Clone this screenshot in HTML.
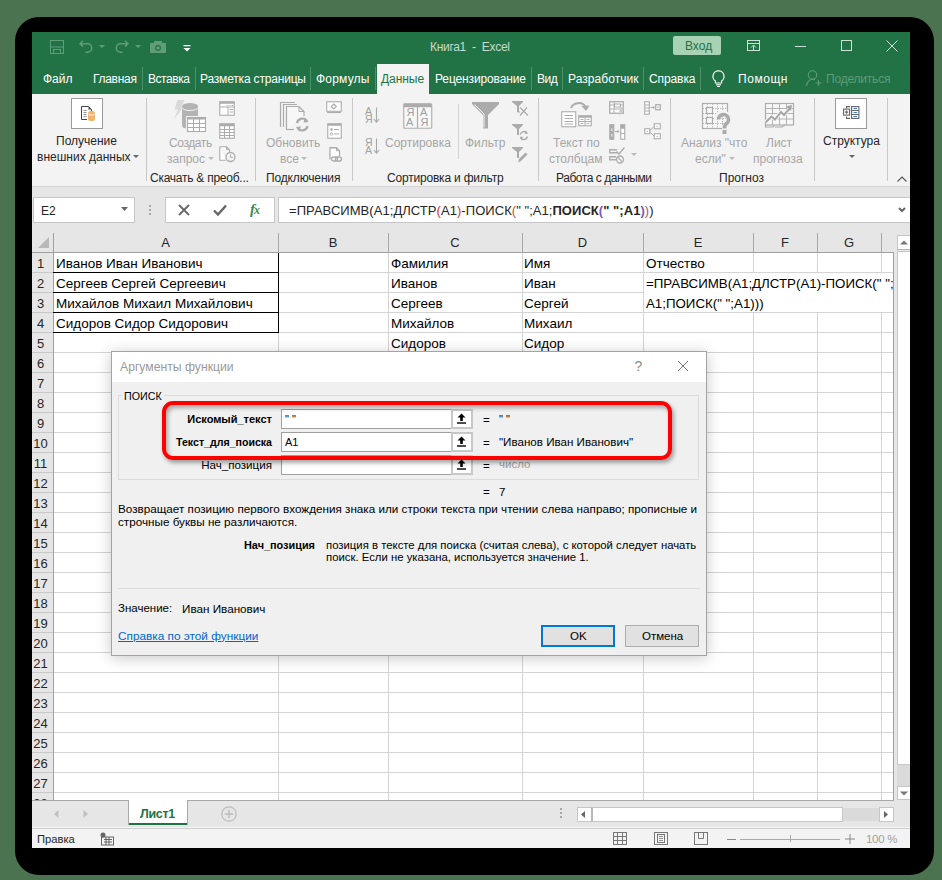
<!DOCTYPE html>
<html><head><meta charset="utf-8"><style>
*{margin:0;padding:0;box-sizing:border-box}
html,body{width:942px;height:880px;overflow:hidden;background:#4c7350;font-family:"Liberation Sans",sans-serif;position:relative}
.a{position:absolute}
.t{position:absolute;line-height:1;white-space:nowrap}
svg{overflow:visible}
</style></head><body>
<div class="a" style="left:15px;top:17px;width:919px;height:858px;background:#000;border-radius:24px"></div>
<div class="a" style="left:32px;top:32px;width:878px;height:816px;background:#f3f3f3"></div>
<div class="a" style="left:32px;top:32px;width:878px;height:62px;background:#217346"></div>
<svg class="a" style="left:50px;top:40px;" width="15" height="14" viewBox="0 0 15 14"><rect x="0.5" y="0.5" width="13" height="13" fill="none" stroke="#5f9d78"/><path d="M0.5 7 H13.5" stroke="#5f9d78"/><rect x="3.5" y="9.5" width="7" height="4" fill="none" stroke="#5f9d78"/></svg>
<svg class="a" style="left:79px;top:40px;" width="14" height="13" viewBox="0 0 14 13"><path d="M4 0.8 L1 3.8 L4 6.8 M1 3.8 H8.5 A4.2 4.2 0 0 1 8.5 12.2 H6.5" fill="none" stroke="#5f9d78" stroke-width="1.5"/></svg>
<svg class="a" style="left:99px;top:45px;" width="6" height="4" viewBox="0 0 6 4"><path d="M0 0 H6 L3 3 Z" fill="#5f9d78"/></svg>
<svg class="a" style="left:115px;top:40px;" width="14" height="13" viewBox="0 0 14 13"><path d="M10 0.8 L13 3.8 L10 6.8 M13 3.8 H5.5 A4.2 4.2 0 0 0 5.5 12.2 H7.5" fill="none" stroke="#5f9d78" stroke-width="1.5"/></svg>
<svg class="a" style="left:135px;top:45px;" width="6" height="4" viewBox="0 0 6 4"><path d="M0 0 H6 L3 3 Z" fill="#5f9d78"/></svg>
<svg class="a" style="left:150px;top:41px;" width="16" height="12" viewBox="0 0 16 12"><rect x="0" y="2" width="16" height="10" fill="#5f9d78"/><rect x="4" y="0" width="8" height="3" fill="#5f9d78"/><circle cx="8" cy="7" r="3" fill="#217346"/><circle cx="8" cy="7" r="1.8" fill="#5f9d78"/></svg>
<svg class="a" style="left:183px;top:45px;" width="8" height="7" viewBox="0 0 8 7"><rect x="0.5" y="0" width="7" height="1.3" fill="#fff"/><path d="M0.5 3 H7.5 L4 6.5 Z" fill="#fff"/></svg>
<div class="t " style="left:430px;top:40.84px;font-size:12px;color:#c6dccf;font-weight:normal;white-space:pre;letter-spacing:-0.3px">Книга1  -  Excel</div>
<div class="a" style="left:673px;top:36px;width:48px;height:19px;background:#a7d2b4;border-radius:2px"></div>
<div class="t " style="left:685px;top:39.84px;font-size:12px;color:#217346;font-weight:normal;">Вход</div>
<svg class="a" style="left:747px;top:40px;" width="13" height="11" viewBox="0 0 13 11"><rect x="0.5" y="0.5" width="12" height="10" fill="none" stroke="#cfe1d6" stroke-width="1"/><line x1="0.5" y1="3.5" x2="12.5" y2="3.5" stroke="#cfe1d6"/><path d="M4 7.5 L6.5 5 L9 7.5 M6.5 5.5 V10.5" stroke="#cfe1d6" fill="none" stroke-width="1"/></svg>
<div class="a" style="left:795px;top:46px;width:11px;height:1px;background:#cfe1d6"></div>
<div class="a" style="left:841px;top:40px;width:11px;height:11px;border:1px solid #cfe1d6"></div>
<svg class="a" style="left:886px;top:40px;" width="12" height="12" viewBox="0 0 12 12"><path d="M0.5 0.5 L11.5 11.5 M11.5 0.5 L0.5 11.5" stroke="#cfe1d6" stroke-width="1"/></svg>
<div class="a" style="left:142px;top:67px;width:1px;height:23px;background:#4e9068"></div>
<div class="a" style="left:195px;top:67px;width:1px;height:23px;background:#4e9068"></div>
<div class="a" style="left:310px;top:67px;width:1px;height:23px;background:#4e9068"></div>
<div class="a" style="left:375px;top:67px;width:1px;height:23px;background:#4e9068"></div>
<div class="a" style="left:531px;top:67px;width:1px;height:23px;background:#4e9068"></div>
<div class="a" style="left:562px;top:67px;width:1px;height:23px;background:#4e9068"></div>
<div class="a" style="left:643px;top:67px;width:1px;height:23px;background:#4e9068"></div>
<div class="a" style="left:700px;top:67px;width:1px;height:23px;background:#4e9068"></div>
<div class="a" style="left:377px;top:64px;width:52px;height:30px;background:#f3f3f3"></div>
<div class="t " style="left:43px;top:73.34px;font-size:12px;color:#ffffff;font-weight:normal;letter-spacing:-0.0px">Файл</div>
<div class="t " style="left:93px;top:73.34px;font-size:12px;color:#ffffff;font-weight:normal;letter-spacing:-0.3px">Главная</div>
<div class="t " style="left:148px;top:73.34px;font-size:12px;color:#ffffff;font-weight:normal;letter-spacing:-0.45px">Вставка</div>
<div class="t " style="left:200px;top:73.34px;font-size:12px;color:#ffffff;font-weight:normal;letter-spacing:-0.18px">Разметка страницы</div>
<div class="t " style="left:316px;top:73.34px;font-size:12px;color:#ffffff;font-weight:normal;letter-spacing:0.2px">Формулы</div>
<div class="t " style="left:435px;top:73.34px;font-size:12px;color:#ffffff;font-weight:normal;letter-spacing:-0.13px">Рецензирование</div>
<div class="t " style="left:537px;top:73.34px;font-size:12px;color:#ffffff;font-weight:normal;letter-spacing:-0.45px">Вид</div>
<div class="t " style="left:568px;top:73.34px;font-size:12px;color:#ffffff;font-weight:normal;letter-spacing:0.05px">Разработчик</div>
<div class="t " style="left:649px;top:73.34px;font-size:12px;color:#ffffff;font-weight:normal;letter-spacing:-0.1px">Справка</div>
<div class="t " style="left:738px;top:73.34px;font-size:12px;color:#ffffff;font-weight:normal;letter-spacing:0.55px">Помощн</div>
<div class="t " style="left:381px;top:73.34px;font-size:12px;color:#217346;font-weight:normal;letter-spacing:-0.05px">Данные</div>
<svg class="a" style="left:712px;top:70px;" width="13" height="17" viewBox="0 0 13 17"><path d="M6.5 0.8 A5.6 5.6 0 0 1 9.6 11 V13 H3.4 V11 A5.6 5.6 0 0 1 6.5 0.8 Z" fill="none" stroke="#fff" stroke-width="1.1"/><line x1="4" y1="14.8" x2="9" y2="14.8" stroke="#fff" stroke-width="1.1"/><line x1="5" y1="16.5" x2="8" y2="16.5" stroke="#fff" stroke-width="1"/></svg>
<svg class="a" style="left:806px;top:70px;" width="17" height="17" viewBox="0 0 17 17"><circle cx="6.5" cy="5" r="4.2" fill="none" stroke="#5f9c78" stroke-width="1.1"/><path d="M0.6 16 A6.5 6.5 0 0 1 9 9.6" fill="none" stroke="#5f9c78" stroke-width="1.1"/><path d="M12.5 10 V16 M9.5 13 H15.5" stroke="#5f9c78" stroke-width="1.1"/></svg>
<div class="t " style="left:826px;top:73.34px;font-size:12px;color:#5f9c78;font-weight:normal;letter-spacing:-0.2px">Поделиться</div>
<div class="a" style="left:32px;top:94px;width:878px;height:92px;background:#f3f3f3"></div>
<div class="a" style="left:32px;top:186px;width:878px;height:1px;background:#d6d6d6"></div>
<div class="a" style="left:32px;top:187px;width:878px;height:46px;background:#e6e6e6"></div>
<div class="a" style="left:146px;top:98px;width:1px;height:83px;background:#c8c8c8"></div>
<div class="a" style="left:255px;top:98px;width:1px;height:83px;background:#c8c8c8"></div>
<div class="a" style="left:352px;top:98px;width:1px;height:83px;background:#c8c8c8"></div>
<div class="a" style="left:538px;top:98px;width:1px;height:83px;background:#c8c8c8"></div>
<div class="a" style="left:670px;top:98px;width:1px;height:83px;background:#c8c8c8"></div>
<div class="a" style="left:814px;top:98px;width:1px;height:83px;background:#c8c8c8"></div>
<div class="a" style="left:887px;top:98px;width:1px;height:83px;background:#c8c8c8"></div>
<div class="a" style="left:458px;top:104px;width:1px;height:55px;background:#d4d4d4"></div>
<div class="a" style="left:71px;top:98px;width:32px;height:31px;background:#fff;border:1px solid #999"></div>
<svg class="a" style="left:81px;top:106px;" width="15" height="16" viewBox="0 0 15 16"><path d="M0.5 13.5 V0.5 H7.5 L10.5 3.5 V5" fill="#fff" stroke="#444" stroke-width="1"/><path d="M7.5 0.5 V3.5 H10.5 Z" fill="#444"/><path d="M2.5 4.5 H5.5 M2.5 6.5 H5.5 M2.5 8.5 H5.5 M2.5 10.5 H5.5" stroke="#777" stroke-width="0.8"/><path d="M0.5 13.5 H6" stroke="#444"/><rect x="7" y="5" width="7" height="10" rx="2.5" fill="#f2b36a"/><path d="M7.5 8.5 Q10.5 10 13.5 8.5" stroke="#fff" stroke-width="0.9" fill="none"/></svg>
<div class="t " style="left:56px;top:135.34px;font-size:12px;color:#262626;font-weight:normal;">Получение</div>
<div class="t " style="left:37px;top:150.64px;font-size:12px;color:#262626;font-weight:normal;">внешних данных</div>
<svg class="a" style="left:133px;top:155px;" width="6" height="4" viewBox="0 0 6 4"><path d="M0 0 H6 L3 3 Z" fill="#666"/></svg>
<div class="t " style="left:169px;top:136.64px;font-size:12px;color:#a6a6a6;font-weight:normal;letter-spacing:-0.4px">Создать</div>
<div class="t " style="left:167px;top:152.84px;font-size:12px;color:#a6a6a6;font-weight:normal;">запрос</div>
<svg class="a" style="left:208px;top:157px;" width="6" height="4" viewBox="0 0 6 4"><path d="M0 0 H6 L3 3 Z" fill="#bbb"/></svg>
<div class="t " style="left:150px;top:172.34px;font-size:12px;color:#262626;font-weight:normal;letter-spacing:-0.25px">Скачать &amp; преоб...</div>
<div class="t " style="left:266px;top:136.64px;font-size:12px;color:#a6a6a6;font-weight:normal;">Обновить</div>
<div class="t " style="left:280px;top:152.84px;font-size:12px;color:#a6a6a6;font-weight:normal;">все</div>
<svg class="a" style="left:301px;top:157px;" width="6" height="4" viewBox="0 0 6 4"><path d="M0 0 H6 L3 3 Z" fill="#bbb"/></svg>
<div class="t " style="left:266px;top:172.34px;font-size:12px;color:#262626;font-weight:normal;letter-spacing:-0.15px">Подключения</div>
<div class="t " style="left:385px;top:137.34px;font-size:12px;color:#a6a6a6;font-weight:normal;">Сортировка</div>
<div class="t " style="left:465px;top:137.34px;font-size:12px;color:#a6a6a6;font-weight:normal;">Фильтр</div>
<div class="t " style="left:387px;top:172.34px;font-size:12px;color:#262626;font-weight:normal;letter-spacing:-0.2px">Сортировка и фильтр</div>
<div class="t " style="left:553px;top:137.34px;font-size:12px;color:#a6a6a6;font-weight:normal;">Текст по</div>
<div class="t " style="left:549px;top:153.14px;font-size:12px;color:#a6a6a6;font-weight:normal;">столбцам</div>
<svg class="a" style="left:631px;top:153px;" width="6" height="4" viewBox="0 0 6 4"><path d="M0 0 H6 L3 3 Z" fill="#bbb"/></svg>
<div class="t " style="left:556px;top:172.34px;font-size:12px;color:#262626;font-weight:normal;letter-spacing:-0.45px">Работа с данными</div>
<div class="t " style="left:681px;top:137.34px;font-size:12px;color:#a6a6a6;font-weight:normal;">Анализ &quot;что</div>
<div class="t " style="left:695px;top:153.14px;font-size:12px;color:#a6a6a6;font-weight:normal;">если&quot;</div>
<svg class="a" style="left:729px;top:157px;" width="6" height="4" viewBox="0 0 6 4"><path d="M0 0 H6 L3 3 Z" fill="#bbb"/></svg>
<div class="t " style="left:766px;top:137.34px;font-size:12px;color:#a6a6a6;font-weight:normal;">Лист</div>
<div class="t " style="left:753px;top:153.14px;font-size:12px;color:#a6a6a6;font-weight:normal;">прогноза</div>
<div class="t " style="left:719px;top:172.34px;font-size:12px;color:#262626;font-weight:normal;">Прогноз</div>
<div class="a" style="left:835px;top:98px;width:32px;height:31px;background:#fff;border:1px solid #999"></div>
<div class="t " style="left:823px;top:134.84px;font-size:12px;color:#262626;font-weight:normal;">Структура</div>
<svg class="a" style="left:849px;top:155px;" width="6" height="4" viewBox="0 0 6 4"><path d="M0 0 H6 L3 3 Z" fill="#666"/></svg>
<svg class="a" style="left:897px;top:176px;" width="10" height="6" viewBox="0 0 10 6"><path d="M0.5 5.5 L5 1 L9.5 5.5" fill="none" stroke="#555" stroke-width="1.1"/></svg>
<svg class="a" style="left:170px;top:96px;" width="40" height="40" viewBox="0 0 40 40">
<path d="M7.5 4 L14.7 4 L11 11 L13.5 11 L4 23 L8 13.5 L4.5 13.5 Z" fill="#d9d9d9"/>
<path d="M12 10 V30 A8 3 0 0 0 28 30 V10 Z" fill="#b3b3b3"/>
<ellipse cx="20" cy="10" rx="8" ry="3" fill="#b3b3b3"/>
<path d="M12 11.5 A8 3 0 0 0 28 11.5" fill="none" stroke="#f3f3f3" stroke-width="1"/>
<rect x="16" y="20" width="21" height="16" fill="#f3f3f3"/>
<rect x="17.5" y="21.5" width="18" height="14" fill="#fff" stroke="#acacac" stroke-width="1.1"/>
<rect x="17.5" y="21.5" width="18" height="2" fill="#acacac"/>
<path d="M23.5 23 V35 M29.5 23 V35 M17.5 27.5 H35.5 M17.5 31.5 H35.5" stroke="#acacac" stroke-width="1"/>
</svg>
<svg class="a" style="left:219px;top:101px;" width="16" height="15" viewBox="0 0 16 15">
<rect x="0.75" y="0.75" width="14.5" height="13.5" fill="#fff" stroke="#acacac" stroke-width="1.1"/>
<rect x="0.75" y="0.75" width="14.5" height="2" fill="#acacac"/>
<path d="M0.75 6 H15.25 M9 6 V14" stroke="#acacac" stroke-width="1"/>
<path d="M7.5 4.5 h1 M9.5 4.5 h1 M11.5 4.5 h1 M13 4.5 h1 M10.5 8.5 H14 M10.5 11 H14" stroke="#acacac" stroke-width="1"/>
</svg>
<svg class="a" style="left:219px;top:123px;" width="16" height="16" viewBox="0 0 16 16">
<rect x="0.75" y="0.75" width="14.5" height="14.5" fill="#fff" stroke="#acacac" stroke-width="1.1"/>
<rect x="0.75" y="0.75" width="14.5" height="2.5" fill="#acacac"/>
<path d="M5.5 3 V15 M10.5 3 V15 M0.75 6.5 H15.25 M0.75 9.5 H15.25 M0.75 12.5 H15.25" stroke="#acacac" stroke-width="1"/>
</svg>
<svg class="a" style="left:219px;top:146px;" width="17" height="16" viewBox="0 0 17 16">
<path d="M0.75 0.75 H7.5 L10.5 3.75 V7 M7 14.25 H0.75 V0.75" fill="#fff" stroke="#acacac" stroke-width="1.1"/>
<path d="M7.5 0.75 V3.75 H10.5" fill="none" stroke="#acacac" stroke-width="1"/>
<circle cx="11.5" cy="11" r="4.5" fill="#f3f3f3" stroke="#acacac" stroke-width="1.3"/>
<path d="M11.5 8.5 V11.3 H14" fill="none" stroke="#acacac" stroke-width="1"/>
</svg>
<svg class="a" style="left:275px;top:96px;" width="40" height="40" viewBox="0 0 40 40">
<path d="M5.5 31 V6.5 H20" fill="none" stroke="#acacac" stroke-width="1.2"/>
<path d="M8.5 31 V8.5 H22" fill="none" stroke="#acacac" stroke-width="1.2"/>
<path d="M11.5 33.5 V10.5 H24 L29 15.5 V20" fill="#f7f7f7" stroke="#acacac" stroke-width="1.2"/>
<path d="M19 33.5 H11.5" stroke="#acacac" stroke-width="1.2"/>
<path d="M24 10.5 V15.5 H29" fill="none" stroke="#acacac" stroke-width="1"/>
<path d="M22 27 A5.5 5.5 0 0 1 32 25 M32.5 30 A5.5 5.5 0 0 1 22.5 32" fill="none" stroke="#ababab" stroke-width="2.2"/>
<path d="M30 21.5 L33.5 26 L28.5 26.5 Z M24.5 35.5 L21 31 L26 30.5 Z" fill="#ababab"/>
</svg>
<svg class="a" style="left:326px;top:101px;" width="16" height="13" viewBox="0 0 16 13">
<rect x="0.75" y="0.75" width="14.5" height="9.5" fill="#fff" stroke="#acacac" stroke-width="1.1"/>
<path d="M1 11.5 H15" stroke="#acacac" stroke-width="1.1"/>
<path d="M7.8 3 L10.3 5.5 L7.8 8 L5.3 5.5 Z" fill="none" stroke="#acacac" stroke-width="1.2"/>
</svg>
<svg class="a" style="left:327px;top:123px;" width="15" height="16" viewBox="0 0 15 16">
<rect x="0.75" y="0.75" width="13.5" height="14.5" fill="#fff" stroke="#acacac" stroke-width="1.1"/>
<rect x="0.75" y="0.75" width="13.5" height="2" fill="#acacac"/>
<circle cx="4.5" cy="6.5" r="1.3" fill="#acacac"/><circle cx="4.5" cy="11" r="1.3" fill="none" stroke="#acacac" stroke-width="0.9"/>
<path d="M7 6.5 H12 M7 11 H12" stroke="#acacac" stroke-width="1"/>
</svg>
<svg class="a" style="left:329px;top:147px;" width="15" height="15" viewBox="0 0 15 15">
<path d="M1 12.5 V0.75 H7.5 L10.5 3.75 V9" fill="#fff" stroke="#acacac" stroke-width="1.3"/>
<path d="M7.5 0.75 V3.75 H10.5" fill="none" stroke="#acacac" stroke-width="1"/>
<rect x="2.5" y="10" width="6" height="4" rx="2" fill="none" stroke="#acacac" stroke-width="1.3"/>
<rect x="6.5" y="10" width="6" height="4" rx="2" fill="none" stroke="#acacac" stroke-width="1.3"/>
</svg>
<svg class="a" style="left:365px;top:107px;" width="16" height="18" viewBox="0 0 16 18">
<text x="0" y="8" style="font-family:Liberation Sans;font-size:10.5px;fill:#a0a0a0">A</text><text x="0" y="16" style="font-family:Liberation Sans;font-size:10.5px;fill:#a0a0a0">Я</text>
<path d="M11.5 0.5 V15" stroke="#a8a8a8" stroke-width="1.1"/><path d="M8.8 12 L11.5 15.2 L14.2 12" fill="none" stroke="#a8a8a8" stroke-width="1.1"/>
</svg>
<svg class="a" style="left:365px;top:138px;" width="16" height="18" viewBox="0 0 16 18">
<text x="0" y="8" style="font-family:Liberation Sans;font-size:10.5px;fill:#a0a0a0">Я</text><text x="0" y="16" style="font-family:Liberation Sans;font-size:10.5px;fill:#a0a0a0">A</text>
<path d="M11.5 0.5 V15" stroke="#a8a8a8" stroke-width="1.1"/><path d="M8.8 12 L11.5 15.2 L14.2 12" fill="none" stroke="#a8a8a8" stroke-width="1.1"/>
</svg>
<svg class="a" style="left:403px;top:103px;" width="30" height="26" viewBox="0 0 30 26">
<rect x="0.75" y="0.75" width="28" height="24.5" rx="1" fill="#f7f7f7" stroke="#acacac" stroke-width="1.1"/>
<rect x="0.75" y="0.75" width="28" height="3.5" fill="#acacac"/>
<path d="M14.5 4 V25" stroke="#acacac" stroke-width="1.2"/>
<text x="3.5" y="13" style="font-family:Liberation Sans;font-size:11px;fill:#a0a0a0">Я</text><text x="17" y="13" style="font-family:Liberation Sans;font-size:11px;fill:#a0a0a0">A</text>
<text x="3" y="22.5" style="font-family:Liberation Sans;font-size:11px;fill:#a0a0a0">A</text><text x="17.5" y="22.5" style="font-family:Liberation Sans;font-size:11px;fill:#a0a0a0">Я</text>
</svg>
<svg class="a" style="left:472px;top:102px;" width="28" height="28" viewBox="0 0 28 28">
<path d="M0 0 H27 V2 L16 13 V26.5 H11 V13 L0 2 Z" fill="#ababab"/>
<path d="M2.5 2.5 L12 12 V25.5" fill="none" stroke="#f6f6f6" stroke-width="1"/>
</svg>
<svg class="a" style="left:512px;top:101px;" width="17" height="16" viewBox="0 0 17 16">
<path d="M0 0 H11 V1 L7 5 V11 H5 V5 L0 1 Z" fill="#ababab"/>
<path d="M6 8 V11 H8" fill="none" stroke="#ababab" stroke-width="1.2"/>
<path d="M8 14.5 L15 6.5 M8 6.5 L16 14.5" stroke="#ababab" stroke-width="1.2"/>
</svg>
<svg class="a" style="left:512px;top:124px;" width="17" height="17" viewBox="0 0 17 17">
<path d="M0 0 H11 V1 L7 5 V11 H5 V5 L0 1 Z" fill="#ababab"/>
<path d="M8.3 10.5 A3.8 3.8 0 0 1 15 9 M15.5 12.5 A3.8 3.8 0 0 1 8.7 14" fill="none" stroke="#ababab" stroke-width="1.4"/>
<path d="M13.8 6.5 L16 9.8 L12.6 9.8 Z M9.6 16 L7.6 12.8 L11 12.8 Z" fill="#ababab"/>
</svg>
<svg class="a" style="left:512px;top:147px;" width="17" height="17" viewBox="0 0 17 17">
<path d="M0 0 H11 V1 L7 5 V11 H5 V5 L0 1 Z" fill="#ababab"/>
<path d="M6 15.5 L7 12 L13.5 5.5 L15.5 7.5 L9 14 Z" fill="#ababab"/>
</svg>
<svg class="a" style="left:561px;top:98px;" width="32" height="30" viewBox="0 0 32 30">
<rect x="0.75" y="13.75" width="14" height="15" fill="#fff" stroke="#acacac" stroke-width="1.1"/>
<path d="M3.5 17.5 H12 M3.5 20.5 H12 M3.5 23.5 H12 M3.5 26 H12" stroke="#acacac" stroke-width="1"/>
<rect x="17.75" y="17.75" width="12.5" height="10" fill="#fff" stroke="#acacac" stroke-width="1.1"/>
<rect x="17.75" y="17.75" width="12.5" height="2" fill="#acacac"/>
<path d="M24 19.5 V27.5 M17.75 23.5 H30.25" stroke="#acacac" stroke-width="1"/>
<path d="M19.5 21.5 h3 M25.5 21.5 h3 M19.5 25.5 h3 M25.5 25.5 h3" stroke="#acacac" stroke-width="0.9"/>
<path d="M10 10 A8 7 0 0 1 24.5 8.5" fill="none" stroke="#acacac" stroke-width="2"/>
<path d="M20.5 8 L25 13 L28.5 7.5 Z" fill="#acacac"/>
</svg>
<svg class="a" style="left:609px;top:101px;" width="16" height="16" viewBox="0 0 16 16">
<rect x="0.75" y="0.75" width="13.5" height="11.5" fill="#fff" stroke="#acacac" stroke-width="1.3"/>
<path d="M0.75 4 H14 M0.75 8 H14 M5 0.75 V12" stroke="#acacac" stroke-width="0.9"/>
<rect x="5.5" y="3" width="6" height="3" fill="#f7f7f7" stroke="#acacac" stroke-width="1"/>
<path d="M12 6 L15.5 6 L12.5 10 L14 10 L10 15.5 L11.5 11 L10 11 Z" fill="#c9c9c9"/>
</svg>
<svg class="a" style="left:609px;top:124px;" width="17" height="16" viewBox="0 0 17 16">
<rect x="0.75" y="0.75" width="4" height="14.5" fill="#fff" stroke="#acacac" stroke-width="1.1"/>
<rect x="0.75" y="0.75" width="4" height="14.5" fill="#acacac"/>
<rect x="2" y="4.5" width="1.5" height="2.5" fill="#ddd"/><rect x="2" y="10" width="1.5" height="2.5" fill="#ddd"/>
<rect x="11.75" y="0.75" width="4" height="14.5" fill="#fff" stroke="#acacac" stroke-width="1.1"/>
<rect x="11.75" y="0.75" width="4" height="4" fill="#acacac"/>
<path d="M11.75 9.5 H15.75" stroke="#acacac" stroke-width="1"/>
<path d="M6 7.5 H9.5" stroke="#acacac" stroke-width="1"/><path d="M8.5 5.8 L10.5 7.5 L8.5 9.2 Z" fill="#acacac"/>
</svg>
<svg class="a" style="left:609px;top:147px;" width="17" height="17" viewBox="0 0 17 17">
<path d="M8 5.75 H0.75 V2.75 H8" fill="none" stroke="#acacac" stroke-width="1.3"/>
<path d="M7.5 12.75 H0.75 V9.75 H7" fill="none" stroke="#acacac" stroke-width="1.3"/>
<path d="M7.5 4.5 L10 7 L15.5 0.5" fill="none" stroke="#acacac" stroke-width="1.3"/>
<circle cx="11" cy="12.5" r="3.5" fill="none" stroke="#acacac" stroke-width="1.3"/><path d="M8.6 10.1 L13.4 14.9" stroke="#acacac" stroke-width="1.2"/>
</svg>
<svg class="a" style="left:644px;top:101px;" width="17" height="14" viewBox="0 0 17 14">
<rect x="0.75" y="0.75" width="4.5" height="12.5" fill="#fff" stroke="#acacac" stroke-width="1.1"/>
<path d="M0.75 4 H5 M0.75 7 H5 M0.75 10 H5" stroke="#acacac" stroke-width="1"/>
<path d="M6.5 6.5 H10" stroke="#acacac" stroke-width="1"/><path d="M9 5 L11 6.5 L9 8 Z" fill="#acacac"/>
<rect x="11.75" y="3.75" width="4.5" height="5" fill="#fff" stroke="#acacac" stroke-width="1.3"/>
<rect x="13.3" y="5.6" width="1.3" height="1.3" fill="#acacac"/>
</svg>
<svg class="a" style="left:644px;top:123px;" width="17" height="17" viewBox="0 0 17 17">
<rect x="0.75" y="5.75" width="5" height="5" fill="#fff" stroke="#acacac" stroke-width="1.1"/>
<rect x="10.25" y="0.75" width="6" height="5" fill="#fff" stroke="#acacac" stroke-width="1.1"/>
<rect x="10.25" y="10.75" width="6" height="5" fill="#fff" stroke="#acacac" stroke-width="1.1"/>
<path d="M5.5 8 L10 3.5 M5.5 8.5 L10 13" stroke="#acacac" stroke-width="1"/>
<path d="M2.5 8.5 h1.5 M12.5 3.5 h1.5 M12.5 13.5 h1.5" stroke="#acacac" stroke-width="0.8"/>
</svg>
<svg class="a" style="left:702px;top:103px;" width="34" height="34" viewBox="0 0 34 34">
<rect x="0.5" y="0.5" width="25" height="25" fill="#f7f7f7" stroke="#acacac" stroke-width="1.2"/>
<path d="M5.5 0.5 V25.5 M10.5 0.5 V25.5 M15.5 0.5 V25.5 M20.5 0.5 V25.5 M0.5 5.5 H25.5 M0.5 10.5 H25.5 M0.5 15.5 H25.5 M0.5 20.5 H25.5" stroke="#acacac" stroke-width="0.8" stroke-dasharray="1.5 1"/>
<rect x="4.5" y="4.5" width="6" height="6" fill="#f7f7f7" stroke="#acacac" stroke-width="1.2"/>
<rect x="4.5" y="14.5" width="6" height="6" fill="#f7f7f7" stroke="#acacac" stroke-width="1.2"/>
<path d="M15 17 A6 6 0 1 1 25 21 Q23 23 23 26" fill="none" stroke="#f3f3f3" stroke-width="6"/>
<path d="M16.5 16.5 A5 5 0 1 1 24.5 20.5 Q22.5 22 22.5 25.5" fill="none" stroke="#ababab" stroke-width="3.5"/>
<rect x="20.5" y="27" width="4" height="4" fill="#ababab"/>
</svg>
<svg class="a" style="left:765px;top:103px;" width="30" height="27" viewBox="0 0 30 27">
<rect x="0.5" y="0.5" width="28" height="21.5" fill="#f7f7f7" stroke="#acacac" stroke-width="1.2"/>
<path d="M7.5 0.5 V22 M14.5 0.5 V22 M21.5 0.5 V22 M0.5 5.5 H28.5 M0.5 10.5 H28.5 M0.5 16 H28.5" stroke="#acacac" stroke-width="0.9"/>
<path d="M0.5 22 V24 H8 L9.5 22 M10 24 H17 L20 22" fill="none" stroke="#acacac" stroke-width="1.2"/>
<path d="M1 19 L6.5 13.5 L10 16.5 L16 9 L19 12 L25.5 4.5" fill="none" stroke="#f7f7f7" stroke-width="4"/>
<path d="M1 19 L6.5 13.5 L10 16.5 L16 9 L19 12 L25.5 4.5" fill="none" stroke="#a5a5a5" stroke-width="2"/>
<path d="M21 3.5 L27 2 L26 8 Z" fill="#a5a5a5"/>
</svg>
<svg class="a" style="left:843px;top:106px;" width="17" height="13" viewBox="0 0 17 13">
<path d="M3.5 2.5 V0.6 H7" fill="none" stroke="#666" stroke-width="1.1"/>
<path d="M3.5 10.5 V12.4 H7" fill="none" stroke="#666" stroke-width="1.1"/>
<rect x="0.6" y="3.1" width="6" height="6" fill="#fff" stroke="#666" stroke-width="1.1"/>
<path d="M3.6 4.5 V7.7 M2 6.1 H5.2" stroke="#666" stroke-width="1.1"/>
<rect x="8.6" y="0.6" width="7.3" height="11.8" fill="#fff" stroke="#666" stroke-width="1.1"/>
<path d="M8.6 4.5 H15.9 M8.6 8.5 H15.9" stroke="#666" stroke-width="1"/>
<path d="M10.5 2.5 H14 M10.5 6.5 H14 M10.5 10.5 H14" stroke="#3b78d8" stroke-width="1.1"/>
</svg>
<div class="a" style="left:33px;top:197px;width:102px;height:26px;background:#fff;border:1px solid #c6c6c6"></div>
<div class="t " style="left:41px;top:204.54px;font-size:12px;color:#262626;font-weight:normal;">E2</div>
<svg class="a" style="left:121px;top:207px;" width="7" height="5" viewBox="0 0 7 5"><path d="M0 0 H7 L3.5 4 Z" fill="#666"/></svg>
<div class="a" style="left:149px;top:205px;width:2px;height:2px;background:#a8a8a8"></div>
<div class="a" style="left:149px;top:209px;width:2px;height:2px;background:#a8a8a8"></div>
<div class="a" style="left:149px;top:213px;width:2px;height:2px;background:#a8a8a8"></div>
<div class="a" style="left:165px;top:197px;width:110px;height:26px;background:#fff;border:1px solid #c6c6c6"></div>
<svg class="a" style="left:178px;top:204px;" width="12" height="12" viewBox="0 0 12 12"><path d="M1 1 L11 11 M11 1 L1 11" stroke="#666" stroke-width="1.8"/></svg>
<svg class="a" style="left:213px;top:204px;" width="14" height="12" viewBox="0 0 14 12"><path d="M1 6.5 L5 10.5 L13 1.5" fill="none" stroke="#666" stroke-width="2.4"/></svg>
<div class="t " style="left:250px;top:201.80px;font-size:15px;color:#3a8a5a;font-weight:bold;font-family:Liberation Serif,serif"><i>f</i><span style="font-size:12px;margin-left:-1px"><i>x</i></span></div>
<div class="a" style="left:278px;top:197px;width:632px;height:26px;background:#fff;border:1px solid #c6c6c6;border-right:none"></div>
<div class="t " style="left:289px;top:203.90px;font-size:13px;color:#262626;font-weight:normal;letter-spacing:0.05px">=ПРАВСИМВ<span style="color:#222">(</span>A1;ДЛСТР<span style="color:#e03030">(</span>A1<span style="color:#e03030">)</span>-ПОИСК<span style="color:#c0504d">(</span>" ";A1;<b>ПОИСК<span style="color:#7b5cb6">(</span>" ";A1<span style="color:#7b5cb6">)</span></b><span style="color:#c0504d">)</span>)</div>
<svg class="a" style="left:898px;top:207px;" width="8" height="6" viewBox="0 0 8 6"><path d="M1 1 L4 4 L7 1" fill="none" stroke="#666" stroke-width="2"/></svg>
<div class="a" style="left:32px;top:233px;width:862px;height:20px;background:#e6e6e6"></div>
<div class="a" style="left:32px;top:252px;width:862px;height:1px;background:#a0a0a0"></div>
<div class="a" style="left:32px;top:253px;width:21px;height:547px;background:#e6e6e6"></div>
<div class="a" style="left:53px;top:233px;width:1px;height:567px;background:#a0a0a0"></div>
<svg class="a" style="left:38px;top:237px;" width="12" height="12" viewBox="0 0 12 12"><path d="M11 0 V11 H0 Z" fill="#b8b8b8"/></svg>
<div class="a" style="left:54px;top:253px;width:839px;height:547px;background:#fff"></div>
<div class="a" style="left:278px;top:233px;width:1px;height:20px;background:#a8a8a8"></div>
<div class="a" style="left:388px;top:233px;width:1px;height:20px;background:#a8a8a8"></div>
<div class="a" style="left:522px;top:233px;width:1px;height:20px;background:#a8a8a8"></div>
<div class="a" style="left:643px;top:233px;width:1px;height:20px;background:#a8a8a8"></div>
<div class="a" style="left:753px;top:233px;width:1px;height:20px;background:#a8a8a8"></div>
<div class="a" style="left:817px;top:233px;width:1px;height:20px;background:#a8a8a8"></div>
<div class="a" style="left:881px;top:233px;width:1px;height:20px;background:#a8a8a8"></div>
<div class="t" style="left:53px;width:225px;top:236.30px;font-size:13px;color:#262626;text-align:center">A</div>
<div class="t" style="left:278px;width:110px;top:236.30px;font-size:13px;color:#262626;text-align:center">B</div>
<div class="t" style="left:388px;width:134px;top:236.30px;font-size:13px;color:#262626;text-align:center">C</div>
<div class="t" style="left:522px;width:121px;top:236.30px;font-size:13px;color:#262626;text-align:center">D</div>
<div class="t" style="left:643px;width:110px;top:236.30px;font-size:13px;color:#262626;text-align:center">E</div>
<div class="t" style="left:753px;width:64px;top:236.30px;font-size:13px;color:#262626;text-align:center">F</div>
<div class="t" style="left:817px;width:64px;top:236.30px;font-size:13px;color:#262626;text-align:center">G</div>
<div class="a" style="left:278px;top:253px;width:1px;height:547px;background:#d4d4d4"></div>
<div class="a" style="left:388px;top:253px;width:1px;height:547px;background:#d4d4d4"></div>
<div class="a" style="left:522px;top:253px;width:1px;height:547px;background:#d4d4d4"></div>
<div class="a" style="left:643px;top:253px;width:1px;height:547px;background:#d4d4d4"></div>
<div class="a" style="left:753px;top:253px;width:1px;height:547px;background:#d4d4d4"></div>
<div class="a" style="left:817px;top:253px;width:1px;height:547px;background:#d4d4d4"></div>
<div class="a" style="left:881px;top:253px;width:1px;height:547px;background:#d4d4d4"></div>
<div class="a" style="left:54px;top:272px;width:839px;height:1px;background:#d4d4d4"></div>
<div class="a" style="left:32px;top:272px;width:21px;height:1px;background:#c8c8c8"></div>
<div class="t" style="left:30px;width:21px;text-align:center;top:256.50px;font-size:13px;color:#262626">1</div>
<div class="a" style="left:54px;top:292px;width:839px;height:1px;background:#d4d4d4"></div>
<div class="a" style="left:32px;top:292px;width:21px;height:1px;background:#c8c8c8"></div>
<div class="t" style="left:30px;width:21px;text-align:center;top:276.50px;font-size:13px;color:#262626">2</div>
<div class="a" style="left:54px;top:312px;width:839px;height:1px;background:#d4d4d4"></div>
<div class="a" style="left:32px;top:312px;width:21px;height:1px;background:#c8c8c8"></div>
<div class="t" style="left:30px;width:21px;text-align:center;top:296.50px;font-size:13px;color:#262626">3</div>
<div class="a" style="left:54px;top:332px;width:839px;height:1px;background:#d4d4d4"></div>
<div class="a" style="left:32px;top:332px;width:21px;height:1px;background:#c8c8c8"></div>
<div class="t" style="left:30px;width:21px;text-align:center;top:316.50px;font-size:13px;color:#262626">4</div>
<div class="a" style="left:54px;top:352px;width:839px;height:1px;background:#d4d4d4"></div>
<div class="a" style="left:32px;top:352px;width:21px;height:1px;background:#c8c8c8"></div>
<div class="t" style="left:30px;width:21px;text-align:center;top:336.50px;font-size:13px;color:#262626">5</div>
<div class="a" style="left:54px;top:372px;width:839px;height:1px;background:#d4d4d4"></div>
<div class="a" style="left:32px;top:372px;width:21px;height:1px;background:#c8c8c8"></div>
<div class="t" style="left:30px;width:21px;text-align:center;top:356.50px;font-size:13px;color:#262626">6</div>
<div class="a" style="left:54px;top:392px;width:839px;height:1px;background:#d4d4d4"></div>
<div class="a" style="left:32px;top:392px;width:21px;height:1px;background:#c8c8c8"></div>
<div class="t" style="left:30px;width:21px;text-align:center;top:376.50px;font-size:13px;color:#262626">7</div>
<div class="a" style="left:54px;top:412px;width:839px;height:1px;background:#d4d4d4"></div>
<div class="a" style="left:32px;top:412px;width:21px;height:1px;background:#c8c8c8"></div>
<div class="t" style="left:30px;width:21px;text-align:center;top:396.50px;font-size:13px;color:#262626">8</div>
<div class="a" style="left:54px;top:432px;width:839px;height:1px;background:#d4d4d4"></div>
<div class="a" style="left:32px;top:432px;width:21px;height:1px;background:#c8c8c8"></div>
<div class="t" style="left:30px;width:21px;text-align:center;top:416.50px;font-size:13px;color:#262626">9</div>
<div class="a" style="left:54px;top:452px;width:839px;height:1px;background:#d4d4d4"></div>
<div class="a" style="left:32px;top:452px;width:21px;height:1px;background:#c8c8c8"></div>
<div class="t" style="left:30px;width:21px;text-align:center;top:436.50px;font-size:13px;color:#262626">10</div>
<div class="a" style="left:54px;top:472px;width:839px;height:1px;background:#d4d4d4"></div>
<div class="a" style="left:32px;top:472px;width:21px;height:1px;background:#c8c8c8"></div>
<div class="t" style="left:30px;width:21px;text-align:center;top:456.50px;font-size:13px;color:#262626">11</div>
<div class="a" style="left:54px;top:492px;width:839px;height:1px;background:#d4d4d4"></div>
<div class="a" style="left:32px;top:492px;width:21px;height:1px;background:#c8c8c8"></div>
<div class="t" style="left:30px;width:21px;text-align:center;top:476.50px;font-size:13px;color:#262626">12</div>
<div class="a" style="left:54px;top:512px;width:839px;height:1px;background:#d4d4d4"></div>
<div class="a" style="left:32px;top:512px;width:21px;height:1px;background:#c8c8c8"></div>
<div class="t" style="left:30px;width:21px;text-align:center;top:496.50px;font-size:13px;color:#262626">13</div>
<div class="a" style="left:54px;top:532px;width:839px;height:1px;background:#d4d4d4"></div>
<div class="a" style="left:32px;top:532px;width:21px;height:1px;background:#c8c8c8"></div>
<div class="t" style="left:30px;width:21px;text-align:center;top:516.50px;font-size:13px;color:#262626">14</div>
<div class="a" style="left:54px;top:552px;width:839px;height:1px;background:#d4d4d4"></div>
<div class="a" style="left:32px;top:552px;width:21px;height:1px;background:#c8c8c8"></div>
<div class="t" style="left:30px;width:21px;text-align:center;top:536.50px;font-size:13px;color:#262626">15</div>
<div class="a" style="left:54px;top:572px;width:839px;height:1px;background:#d4d4d4"></div>
<div class="a" style="left:32px;top:572px;width:21px;height:1px;background:#c8c8c8"></div>
<div class="t" style="left:30px;width:21px;text-align:center;top:556.50px;font-size:13px;color:#262626">16</div>
<div class="a" style="left:54px;top:592px;width:839px;height:1px;background:#d4d4d4"></div>
<div class="a" style="left:32px;top:592px;width:21px;height:1px;background:#c8c8c8"></div>
<div class="t" style="left:30px;width:21px;text-align:center;top:576.50px;font-size:13px;color:#262626">17</div>
<div class="a" style="left:54px;top:612px;width:839px;height:1px;background:#d4d4d4"></div>
<div class="a" style="left:32px;top:612px;width:21px;height:1px;background:#c8c8c8"></div>
<div class="t" style="left:30px;width:21px;text-align:center;top:596.50px;font-size:13px;color:#262626">18</div>
<div class="a" style="left:54px;top:632px;width:839px;height:1px;background:#d4d4d4"></div>
<div class="a" style="left:32px;top:632px;width:21px;height:1px;background:#c8c8c8"></div>
<div class="t" style="left:30px;width:21px;text-align:center;top:616.50px;font-size:13px;color:#262626">19</div>
<div class="a" style="left:54px;top:652px;width:839px;height:1px;background:#d4d4d4"></div>
<div class="a" style="left:32px;top:652px;width:21px;height:1px;background:#c8c8c8"></div>
<div class="t" style="left:30px;width:21px;text-align:center;top:636.50px;font-size:13px;color:#262626">20</div>
<div class="a" style="left:54px;top:672px;width:839px;height:1px;background:#d4d4d4"></div>
<div class="a" style="left:32px;top:672px;width:21px;height:1px;background:#c8c8c8"></div>
<div class="t" style="left:30px;width:21px;text-align:center;top:656.50px;font-size:13px;color:#262626">21</div>
<div class="a" style="left:54px;top:692px;width:839px;height:1px;background:#d4d4d4"></div>
<div class="a" style="left:32px;top:692px;width:21px;height:1px;background:#c8c8c8"></div>
<div class="t" style="left:30px;width:21px;text-align:center;top:676.50px;font-size:13px;color:#262626">22</div>
<div class="a" style="left:54px;top:712px;width:839px;height:1px;background:#d4d4d4"></div>
<div class="a" style="left:32px;top:712px;width:21px;height:1px;background:#c8c8c8"></div>
<div class="t" style="left:30px;width:21px;text-align:center;top:696.50px;font-size:13px;color:#262626">23</div>
<div class="a" style="left:54px;top:732px;width:839px;height:1px;background:#d4d4d4"></div>
<div class="a" style="left:32px;top:732px;width:21px;height:1px;background:#c8c8c8"></div>
<div class="t" style="left:30px;width:21px;text-align:center;top:716.50px;font-size:13px;color:#262626">24</div>
<div class="a" style="left:54px;top:752px;width:839px;height:1px;background:#d4d4d4"></div>
<div class="a" style="left:32px;top:752px;width:21px;height:1px;background:#c8c8c8"></div>
<div class="t" style="left:30px;width:21px;text-align:center;top:736.50px;font-size:13px;color:#262626">25</div>
<div class="a" style="left:54px;top:772px;width:839px;height:1px;background:#d4d4d4"></div>
<div class="a" style="left:32px;top:772px;width:21px;height:1px;background:#c8c8c8"></div>
<div class="t" style="left:30px;width:21px;text-align:center;top:756.50px;font-size:13px;color:#262626">26</div>
<div class="a" style="left:54px;top:792px;width:839px;height:1px;background:#d4d4d4"></div>
<div class="a" style="left:32px;top:792px;width:21px;height:1px;background:#c8c8c8"></div>
<div class="t" style="left:30px;width:21px;text-align:center;top:776.50px;font-size:13px;color:#262626">27</div>
<div class="a" style="left:54px;top:812px;width:839px;height:1px;background:#d4d4d4"></div>
<div class="a" style="left:32px;top:812px;width:21px;height:1px;background:#c8c8c8"></div>
<div class="t" style="left:30px;width:21px;text-align:center;top:796.50px;font-size:13px;color:#262626">28</div>
<div class="a" style="left:893px;top:252px;width:1px;height:548px;background:#a0a0a0"></div>
<div class="a" style="left:278px;top:253px;width:1px;height:80px;background:#000"></div>
<div class="a" style="left:53px;top:272px;width:226px;height:1px;background:#000"></div>
<div class="a" style="left:53px;top:292px;width:226px;height:1px;background:#000"></div>
<div class="a" style="left:53px;top:312px;width:226px;height:1px;background:#000"></div>
<div class="a" style="left:53px;top:332px;width:226px;height:1px;background:#000"></div>
<div class="a" style="left:644px;top:273px;width:249px;height:39px;background:#fff"></div>
<div class="t " style="left:56px;top:257.07px;font-size:13.5px;color:#000;font-weight:normal;">Иванов Иван Иванович</div>
<div class="t " style="left:391px;top:257.07px;font-size:13.5px;color:#000;font-weight:normal;">Фамилия</div>
<div class="t " style="left:524px;top:257.07px;font-size:13.5px;color:#000;font-weight:normal;">Имя</div>
<div class="t " style="left:646px;top:257.07px;font-size:13.5px;color:#000;font-weight:normal;">Отчество</div>
<div class="t " style="left:56px;top:277.07px;font-size:13.5px;color:#000;font-weight:normal;">Сергеев Сергей Сергеевич</div>
<div class="t " style="left:391px;top:277.07px;font-size:13.5px;color:#000;font-weight:normal;">Иванов</div>
<div class="t " style="left:524px;top:277.07px;font-size:13.5px;color:#000;font-weight:normal;">Иван</div>
<div class="t " style="left:56px;top:297.07px;font-size:13.5px;color:#000;font-weight:normal;">Михайлов Михаил Михайлович</div>
<div class="t " style="left:391px;top:297.07px;font-size:13.5px;color:#000;font-weight:normal;">Сергеев</div>
<div class="t " style="left:524px;top:297.07px;font-size:13.5px;color:#000;font-weight:normal;">Сергей</div>
<div class="t " style="left:56px;top:317.07px;font-size:13.5px;color:#000;font-weight:normal;">Сидоров Сидор Сидорович</div>
<div class="t " style="left:391px;top:317.07px;font-size:13.5px;color:#000;font-weight:normal;">Михайлов</div>
<div class="t " style="left:524px;top:317.07px;font-size:13.5px;color:#000;font-weight:normal;">Михаил</div>
<div class="t " style="left:391px;top:337.07px;font-size:13.5px;color:#000;font-weight:normal;">Сидоров</div>
<div class="t " style="left:524px;top:337.07px;font-size:13.5px;color:#000;font-weight:normal;">Сидор</div>
<div class="t " style="left:646px;top:277.24px;font-size:13.3px;color:#000;font-weight:normal;">=ПРАВСИМВ(A1;ДЛСТР(A1)-ПОИСК(&quot; &quot;;</div>
<div class="t " style="left:646px;top:297.24px;font-size:13.3px;color:#000;font-weight:normal;">A1;ПОИСК(&quot; &quot;;A1)))</div>
<div class="a" style="left:894px;top:233px;width:16px;height:567px;background:#e6e6e6"></div>
<div class="a" style="left:897px;top:235px;width:13px;height:15px;background:#fff;border:1px solid #c6c6c6;border-right:none"></div>
<svg class="a" style="left:900px;top:240px;" width="8" height="5" viewBox="0 0 8 5"><path d="M0 4.5 L4 0.5 L8 4.5 Z" fill="#777"/></svg>
<div class="a" style="left:897px;top:249px;width:13px;height:1px;background:#b0b0b0"></div>
<div class="a" style="left:897px;top:251px;width:13px;height:514px;background:#fff;border:1px solid #c6c6c6;border-right:none"></div>
<div class="a" style="left:897px;top:765px;width:13px;height:21px;background:#dadada"></div>
<div class="a" style="left:897px;top:786px;width:13px;height:14px;background:#fff;border:1px solid #c6c6c6;border-right:none"></div>
<svg class="a" style="left:900px;top:791px;" width="8" height="5" viewBox="0 0 8 5"><path d="M0 0.5 L4 4.5 L8 0.5 Z" fill="#777"/></svg>
<div class="a" style="left:32px;top:800px;width:878px;height:27px;background:#e6e6e6"></div>
<div class="a" style="left:32px;top:800px;width:862px;height:1px;background:#a8a8a8"></div>
<svg class="a" style="left:54px;top:810px;" width="5" height="8" viewBox="0 0 5 8"><path d="M4.5 0 V8 L0 4 Z" fill="#c0c0c0"/></svg>
<svg class="a" style="left:83px;top:810px;" width="5" height="8" viewBox="0 0 5 8"><path d="M0.5 0 V8 L5 4 Z" fill="#c0c0c0"/></svg>
<div class="a" style="left:128px;top:800px;width:60px;height:25px;background:#fff;border-left:1px solid #a8a8a8;border-right:1px solid #a8a8a8"></div>
<div class="a" style="left:129px;top:823px;width:58px;height:2px;background:#217346"></div>
<div class="t " style="left:140px;top:808.42px;font-size:12.5px;color:#217346;font-weight:bold;letter-spacing:-0.3px">Лист1</div>
<svg class="a" style="left:221px;top:806px;" width="16" height="16" viewBox="0 0 16 16"><circle cx="8" cy="8" r="7.2" fill="none" stroke="#bdbdbd" stroke-width="1.2"/><path d="M8 3.8 V12.2 M3.8 8 H12.2" stroke="#bdbdbd" stroke-width="1.4"/></svg>
<div class="a" style="left:560px;top:808px;width:2px;height:2px;background:#a8a8a8"></div>
<div class="a" style="left:560px;top:812px;width:2px;height:2px;background:#a8a8a8"></div>
<div class="a" style="left:560px;top:816px;width:2px;height:2px;background:#a8a8a8"></div>
<div class="a" style="left:577px;top:807px;width:15px;height:15px;background:#fff;border:1px solid #c6c6c6"></div>
<svg class="a" style="left:581px;top:811px;" width="5" height="8" viewBox="0 0 5 8"><path d="M4 0 V7 L0 3.5 Z" fill="#666"/></svg>
<div class="a" style="left:591px;top:807px;width:252px;height:15px;background:#fff;border:1px solid #c6c6c6;border-left:2px solid #b8b8b8"></div>
<div class="a" style="left:843px;top:808px;width:36px;height:13px;background:#dadada"></div>
<div class="a" style="left:879px;top:807px;width:15px;height:15px;background:#fff;border:1px solid #c6c6c6"></div>
<svg class="a" style="left:884px;top:811px;" width="5" height="8" viewBox="0 0 5 8"><path d="M0 0 V7 L4 3.5 Z" fill="#666"/></svg>
<div class="a" style="left:32px;top:827px;width:878px;height:21px;background:#f3f3f3"></div>
<div class="a" style="left:32px;top:828px;width:878px;height:1px;background:#d0d0d0"></div>
<div class="t " style="left:37px;top:833.52px;font-size:11.2px;color:#262626;font-weight:normal;">Правка</div>
<svg class="a" style="left:100px;top:832px;" width="14" height="13" viewBox="0 0 14 13"><circle cx="3" cy="3" r="2.5" fill="#666"/><rect x="1.5" y="5" width="12" height="8" fill="none" stroke="#666"/><path d="M4 7.5 H12 M4 10 H12 M6 5 V13 M9 5 V13" stroke="#666"/></svg>
<svg class="a" style="left:613px;top:832px;" width="14" height="13" viewBox="0 0 14 13"><rect x="0.5" y="0.5" width="13" height="12" fill="none" stroke="#777"/><path d="M0.5 4.5 H13.5 M0.5 8.5 H13.5 M4.5 0.5 V12.5 M9.5 0.5 V12.5" stroke="#777"/></svg>
<svg class="a" style="left:654px;top:832px;" width="14" height="13" viewBox="0 0 14 13"><rect x="0.5" y="0.5" width="13" height="12" fill="none" stroke="#777"/><rect x="3.5" y="2.5" width="7" height="8" fill="none" stroke="#777"/><path d="M5 4.5 H9 M5 6.5 H9 M5 8.5 H9" stroke="#777" stroke-width="0.8"/></svg>
<svg class="a" style="left:694px;top:832px;" width="14" height="13" viewBox="0 0 14 13"><rect x="0.5" y="0.5" width="13" height="12" fill="none" stroke="#777"/><path d="M4.5 0.5 V6.5 H9.5 V0.5" fill="none" stroke="#777"/></svg>
<div class="a" style="left:727px;top:839px;width:9px;height:1px;background:#888"></div>
<div class="a" style="left:740px;top:839px;width:100px;height:1px;background:#aaa"></div>
<div class="a" style="left:790px;top:835px;width:1px;height:7px;background:#aaa"></div>
<svg class="a" style="left:845px;top:834px;" width="10" height="10" viewBox="0 0 10 10"><path d="M5 0 V10 M0 5 H10" stroke="#888" stroke-width="1"/></svg>
<div class="t " style="left:866px;top:833.77px;font-size:11.5px;color:#a0a0a0;font-weight:normal;letter-spacing:-0.3px">100 %</div>
<div class="a" style="left:111px;top:351px;width:596px;height:305px;background:#f0f0f0;border:1px solid #a3a3a3;box-shadow:0 2px 14px rgba(0,0,0,0.22)"></div>
<div class="a" style="left:112px;top:352px;width:594px;height:30px;background:#fff"></div>
<div class="t " style="left:120px;top:360.67px;font-size:12.2px;color:#9a9a9a;font-weight:normal;">Аргументы функции</div>
<div class="t " style="left:634.5px;top:359.15px;font-size:14px;color:#8a8a8a;font-weight:normal;">?</div>
<svg class="a" style="left:678px;top:361px;" width="10" height="10" viewBox="0 0 10 10"><path d="M0 0 L10 10 M10 0 L0 10" stroke="#777" stroke-width="1"/></svg>
<div class="a" style="left:118px;top:395px;width:581px;height:85px;border:1px solid #dcdcdc"></div>
<div class="a" style="left:122px;top:390px;width:42px;height:10px;background:#f0f0f0"></div>
<div class="t " style="left:124px;top:390.94px;font-size:10.7px;color:#000;font-weight:normal;">ПОИСК</div>
<div class="t" style="right:670px;top:413.89px;font-size:11px;font-weight:bold;color:#000">Искомый_текст</div>
<div class="t" style="right:670px;top:436.83px;font-size:10.6px;font-weight:bold;color:#000">Текст_для_поиска</div>
<div class="t" style="right:670px;top:459.28px;font-size:11.6px;font-weight:normal;color:#000">Нач_позиция</div>
<div class="a" style="left:281px;top:409px;width:171px;height:20px;background:#fff;border:1px solid #a0a0a0;border-right:none"></div>
<div class="a" style="left:451px;top:409px;width:22px;height:20px;background:#fff;border:2px solid #c8c8c8"></div>
<svg class="a" style="left:456px;top:413px;" width="11" height="11" viewBox="0 0 11 11"><path d="M5.5 0.5 L1.5 4.5 H4.2 V8 H6.8 V4.5 H9.5 Z" fill="#000"/><rect x="1" y="9.3" width="9" height="1.4" fill="#000"/></svg>
<div class="t " style="left:483px;top:415.27px;font-size:11.5px;color:#000;font-weight:normal;">=</div>
<div class="a" style="left:281px;top:432px;width:171px;height:20px;background:#fff;border:1px solid #a0a0a0;border-right:none"></div>
<div class="a" style="left:451px;top:432px;width:22px;height:20px;background:#fff;border:2px solid #c8c8c8"></div>
<svg class="a" style="left:456px;top:436px;" width="11" height="11" viewBox="0 0 11 11"><path d="M5.5 0.5 L1.5 4.5 H4.2 V8 H6.8 V4.5 H9.5 Z" fill="#000"/><rect x="1" y="9.3" width="9" height="1.4" fill="#000"/></svg>
<div class="t " style="left:483px;top:438.27px;font-size:11.5px;color:#000;font-weight:normal;">=</div>
<div class="a" style="left:281px;top:455px;width:171px;height:20px;background:#fff;border:1px solid #a0a0a0;border-right:none"></div>
<div class="a" style="left:451px;top:455px;width:22px;height:20px;background:#fff;border:2px solid #c8c8c8"></div>
<svg class="a" style="left:456px;top:459px;" width="11" height="11" viewBox="0 0 11 11"><path d="M5.5 0.5 L1.5 4.5 H4.2 V8 H6.8 V4.5 H9.5 Z" fill="#000"/><rect x="1" y="9.3" width="9" height="1.4" fill="#000"/></svg>
<div class="t " style="left:483px;top:461.27px;font-size:11.5px;color:#000;font-weight:normal;">=</div>
<div class="t " style="left:285px;top:413.69px;font-size:11px;color:#000;font-weight:normal;white-space:pre">&quot; &quot;</div>
<div class="t " style="left:285px;top:437.39px;font-size:11px;color:#000;font-weight:normal;">A1</div>
<div class="t " style="left:499px;top:413.69px;font-size:11px;color:#000;font-weight:normal;white-space:pre">&quot; &quot;</div>
<div class="t " style="left:499px;top:435.68px;font-size:11.6px;color:#000;font-weight:normal;">&quot;Иванов Иван Иванович&quot;</div>
<div class="t " style="left:499px;top:459.27px;font-size:11.5px;color:#a0a0a0;font-weight:normal;">число</div>
<div class="t " style="left:483px;top:487.27px;font-size:11.5px;color:#000;font-weight:normal;">=</div>
<div class="t " style="left:499px;top:486.77px;font-size:11.5px;color:#000;font-weight:normal;">7</div>
<div class="a" style="left:162px;top:401px;width:510px;height:59px;border:4.5px solid #ff0000;border-radius:11px;box-shadow:2px 3px 4px rgba(0,0,0,0.35), inset 2px 3px 4px rgba(0,0,0,0.3)"></div>
<div class="t " style="left:118px;top:502.60px;font-size:11.7px;color:#000;font-weight:normal;">Возвращает позицию первого вхождения знака или строки текста при чтении слева направо; прописные и</div>
<div class="t " style="left:118px;top:515.60px;font-size:11.7px;color:#000;font-weight:normal;">строчные буквы не различаются.</div>
<div class="t " style="left:244px;top:540.07px;font-size:10.9px;color:#000;font-weight:bold;">Нач_позиция</div>
<div class="t " style="left:326px;top:539.69px;font-size:11.35px;color:#000;font-weight:normal;">позиция в тексте для поиска (считая слева), с которой следует начать</div>
<div class="t " style="left:326px;top:552.39px;font-size:11.35px;color:#000;font-weight:normal;">поиск. Если не указана, используется значение 1.</div>
<div class="a" style="left:118px;top:588px;width:582px;height:1px;background:#dcdcdc"></div>
<div class="t " style="left:118px;top:603.27px;font-size:11.5px;color:#000;font-weight:normal;">Значение:</div>
<div class="t " style="left:182px;top:603.10px;font-size:11.7px;color:#000;font-weight:normal;">Иван Иванович</div>
<div class="t " style="left:118px;top:630.51px;font-size:11.8px;color:#0066cc;font-weight:normal;text-decoration:underline">Справка по этой функции</div>
<div class="a" style="left:541px;top:625px;width:74px;height:22px;background:#e1e1e1;border:2px solid #0078d7"></div>
<div class="t " style="left:570px;top:631.27px;font-size:11.5px;color:#000;font-weight:normal;">OK</div>
<div class="a" style="left:625px;top:625px;width:74px;height:22px;background:#e1e1e1;border:1px solid #adadad"></div>
<div class="t " style="left:642px;top:631.27px;font-size:11.5px;color:#000;font-weight:normal;">Отмена</div>
</body></html>
